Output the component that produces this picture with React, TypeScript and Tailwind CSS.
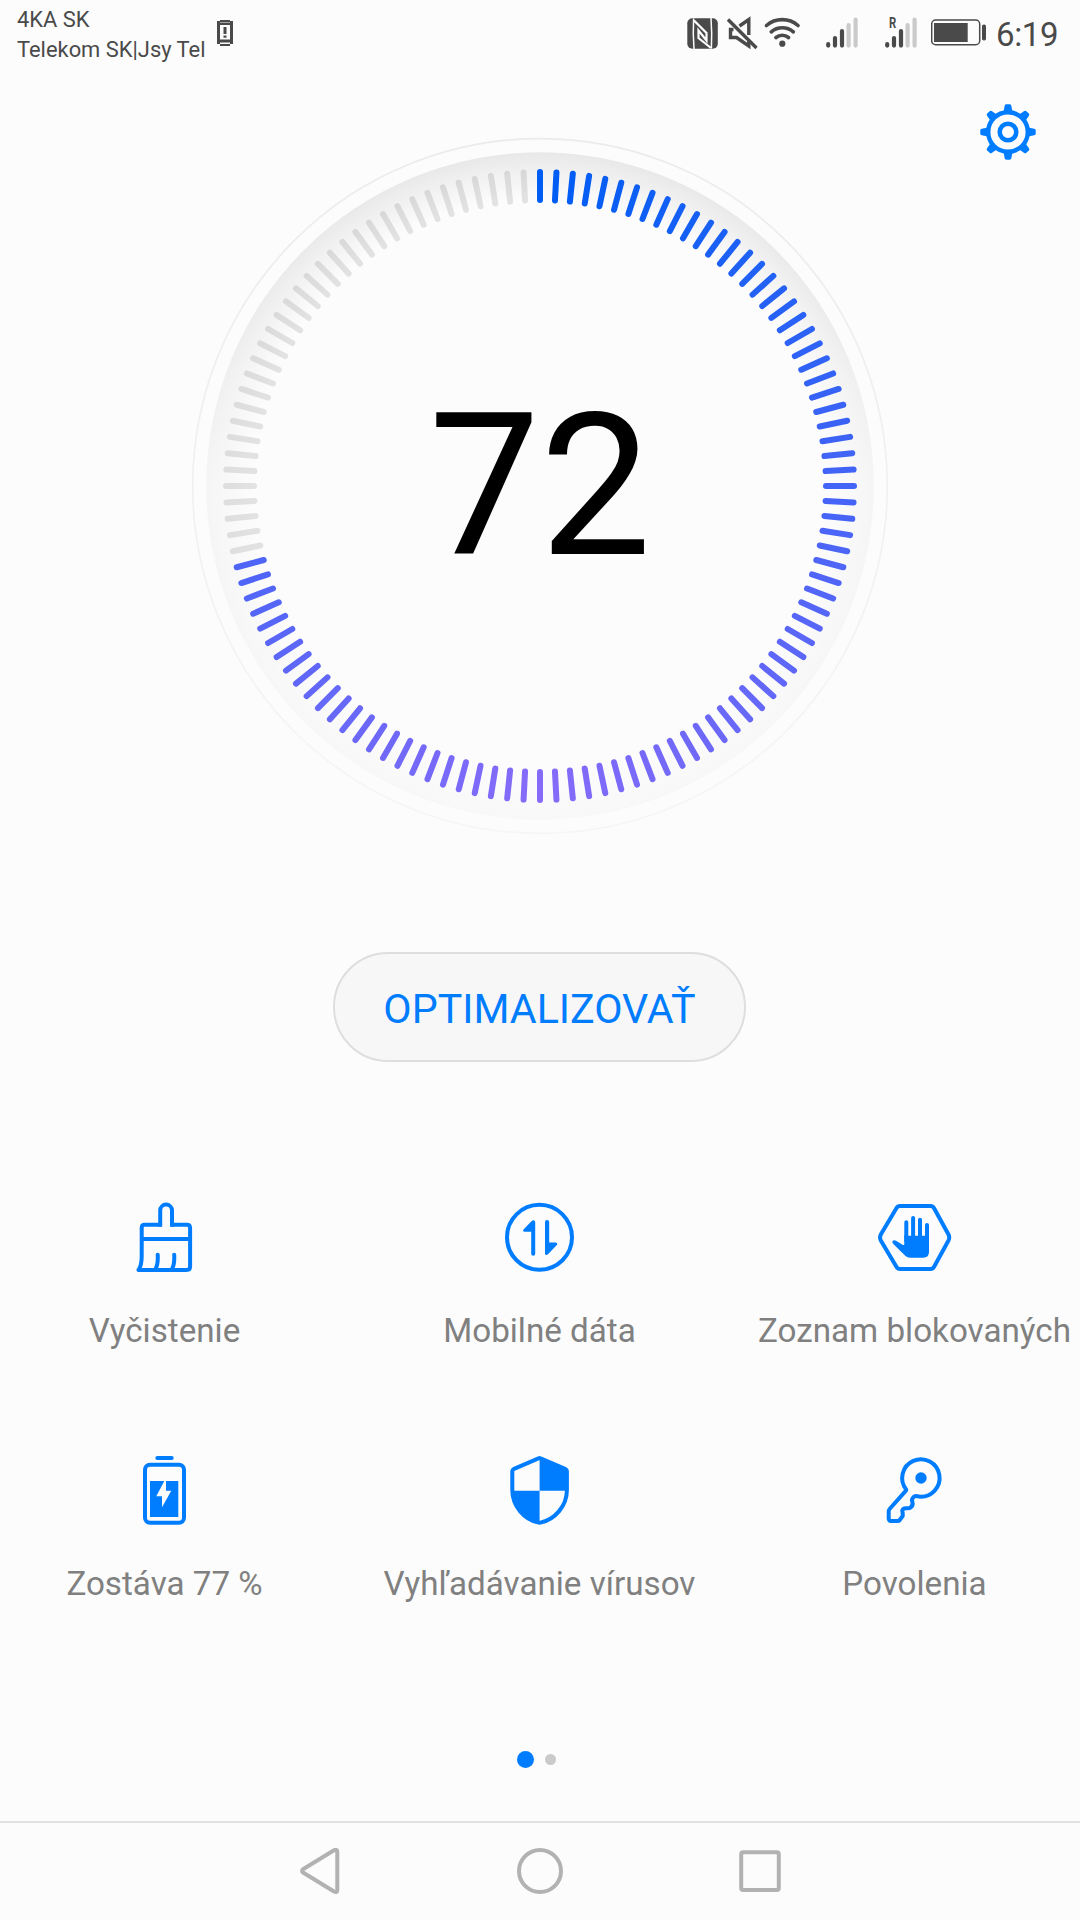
import type { ReactNode } from "react";

const BLUE = "#007dff";
const DARK = "#4a4a4a";

const TICKS = 120;
const SCORE = 72;

function Gauge() {
  const ticks = Array.from({ length: TICKS }, (_, i) => {
    const a = (i * 2 * Math.PI) / TICKS;
    const sin = Math.sin(a);
    const cos = Math.cos(a);
    const t = 1 - Math.abs(i - TICKS / 2) / (TICKS / 2);
    const active = i < Math.round((TICKS * SCORE) / 100);
    const color = active
      ? `rgb(${Math.round(134 * t)}, ${Math.round(93 + 14 * t)}, ${Math.round(244 + 5 * t)})`
      : "rgba(0,0,0,0.1)";
    return (
      <line
        key={i}
        x1={350 + 286 * sin}
        y1={350 - 286 * cos}
        x2={350 + 314 * sin}
        y2={350 - 314 * cos}
        stroke={color}
        strokeWidth="6"
        strokeLinecap="round"
      />
    );
  });
  return (
    <div className="grid h-[700px] w-[700px] place-items-center self-center">
      <svg viewBox="0 0 700 700" className="col-start-1 row-start-1 h-[700px] w-[700px]">
        <defs>
          <linearGradient id="disc" x1="0" y1="0" x2="0" y2="1">
            <stop offset="0" stopColor="#e8e8e8" />
            <stop offset="0.25" stopColor="#ececec" />
            <stop offset="0.5" stopColor="#f5f5f5" />
            <stop offset="1" stopColor="#f8f8f8" />
          </linearGradient>
          <radialGradient id="fade" gradientUnits="userSpaceOnUse" cx="350" cy="350" r="334">
            <stop offset="0.86" stopColor="#fcfcfc" />
            <stop offset="1" stopColor="#fcfcfc" stopOpacity="0" />
          </radialGradient>
          <linearGradient id="rim" x1="0" y1="0" x2="0" y2="1">
            <stop offset="0" stopColor="#ebebeb" />
            <stop offset="1" stopColor="#f6f6f6" />
          </linearGradient>
        </defs>
        <circle cx="350" cy="350" r="347.3" fill="none" stroke="url(#rim)" strokeWidth="1.7" />
        <circle cx="350" cy="350" r="333.7" fill="url(#disc)" />
        <circle cx="350" cy="350" r="333" fill="url(#fade)" />
        {ticks}
      </svg>
      <div className="col-start-1 row-start-1 text-[198px] leading-[200px] text-black">{SCORE}</div>
    </div>
  );
}

function Signal({ roaming = false }: { roaming?: boolean }) {
  return (
    <div className="relative h-[34px] w-[32px]">
      <svg viewBox="0 0 32 34" className="h-[34px] w-[32px]" strokeWidth="4.2" strokeLinecap="round">
        <g stroke={DARK}>
          <path d="M2.2 28.2v1.4M9 22v7.6M16 15v14.6" />
        </g>
        <g stroke="#cacaca">
          <path d="M22.6 9v20.6M29.6 3.6v26" />
        </g>
      </svg>
      {roaming && (
        <span className="absolute top-[-1px] left-[4px] origin-left scale-x-75 text-[15px] leading-[17px] font-bold text-[#4a4a4a]">
          R
        </span>
      )}
    </div>
  );
}

function StatusBar() {
  return (
    <header className="flex h-[66px] items-start justify-between pr-[21px] pl-[17px] text-[#4a4a4a]">
      <div className="flex pt-[5px]">
        <div className="text-[21.900px] leading-[30px] whitespace-nowrap">
          <div>4KA SK</div>
          <div>Telekom SK|Jsy Tel</div>
        </div>
        <svg viewBox="217 20 16 26" className="mt-[15px] ml-[11px] h-[26px] w-[16px]" fill={DARK}>
          <path d="M220 20h10v2h-10zM220 44h10v2h-10z" />
          <path fillRule="evenodd" d="M217 21h3v1.500h10V21h3v23h-3v-1.500h-10V44h-3zM220 25v14.500h10V25z" />
          <path d="M223.500 27h3v7h-3zM223.500 35.500h3v2.300h-3z" />
        </svg>
      </div>
      <div className="mt-4 flex h-[34px] items-center">
        <svg viewBox="687 16 31 34" className="h-[34px] w-[31px]">
          <rect x="687.300" y="18.300" width="30.500" height="30.500" rx="5" fill={DARK} />
          <g fill="none" stroke="#fcfcfc">
            <path strokeWidth="1.500" d="M693.600 18.500q-.8 15 .4 30.500M711.400 48.500q.8-15-.4-30.500" />
            <path strokeWidth="2.200" d="M694 20.500L706.500 33V40.500L698.500 30.500V38L711 48" />
          </g>
        </svg>
        <svg viewBox="727 16 31 34" className="ml-[9px] h-[34px] w-[31px]" fill="none" stroke={DARK} strokeWidth="3.400">
          <path d="M728 19.500l28.500 28.500" />
          <path d="M739.500 26l9.300-6.500v15.500M733.500 29.500h-3v8h6l12.300 8.500v-5" />
        </svg>
        <svg viewBox="764 16 37 34" className="ml-[6px] h-[34px] w-[37px]" fill="none" stroke={DARK} strokeWidth="3.600" strokeLinecap="round">
          <path d="M766.500 25.500a24 24 0 0 1 31.500 0M771.300 31.800a17 17 0 0 1 22 0M776 37.500a10 10 0 0 1 12.500 0" />
          <circle cx="782.300" cy="43.700" r="3.100" fill={DARK} stroke="none" />
        </svg>
        <div className="ml-[25px]">
          <Signal />
        </div>
        <div className="ml-[27px]">
          <Signal roaming />
        </div>
        <svg viewBox="931 16 56 34" className="ml-[14px] h-[34px] w-[56px]">
          <rect x="931.700" y="20" width="48" height="24.700" rx="4" fill="none" stroke={DARK} strokeWidth="1.500" />
          <rect x="934" y="23" width="33.700" height="19" fill={DARK} />
          <rect x="982" y="24.500" width="4" height="16" rx="1.800" fill={DARK} />
        </svg>
        <div className="ml-[9px] h-[34px] w-[63px] pt-[2px] text-[33px] leading-[34px] tracking-[-0.4px] whitespace-nowrap">6:19</div>
      </div>
    </header>
  );
}

function Gear() {
  return (
    <svg viewBox="-28 -28 56 56" className="h-[56px] w-[56px]" fill={BLUE}>
      {[0, 45, 90, 135, 180, 225, 270, 315].map((a) => (
        <path key={a} transform={`rotate(${a})`} d="M-4.500-20l1.200-6.300q.3-1.400 1.600-1.400h3.400q1.300 0 1.600 1.400l1.200 6.300z" />
      ))}
      <circle r="19.800" fill="#fcfcfc" stroke={BLUE} strokeWidth="4.400" />
      <circle r="8.300" fill="none" stroke={BLUE} strokeWidth="4.500" />
    </svg>
  );
}

function Icon({ children }: { children: ReactNode }) {
  return (
    <svg
      viewBox="0 0 72 72"
      className="h-[72px] w-[72px] overflow-visible"
      fill="none"
      stroke={BLUE}
      strokeWidth="4"
      strokeLinecap="round"
      strokeLinejoin="round"
    >
      {children}
    </svg>
  );
}

const items: { label: string; icon: ReactNode }[] = [
  {
    label: "Vyčistenie",
    icon: (
      <Icon>
        <path strokeLinecap="square" d="M31.200 23.800V9.500a5.900 5.900 0 0 1 11.800 0V23.800" />
        <path d="M31.200 23.800H15.700q-3 0-3 3V55q0 9.500-3.200 14H57.500q3.600 0 3.600-3.600V27q0-3.200-3.200-3.200H43M12.700 38H61M28.700 53.700q.6 10-2.500 15M45.200 53.700q.6 10-2.500 15" />
      </Icon>
    ),
  },
  {
    label: "Mobilné dáta",
    icon: (
      <Icon>
        <circle cx="35.500" cy="36.300" r="32.500" />
        <path fill={BLUE} stroke="none" d="M31.200 21v31.700a1.900 1.900 0 0 1-4 0V30.800H20.500q-2.200-.5-1-2.300L28 19.700q2.700-1.200 3.200 1.300zM41 52.700V21a2.100 2.100 0 0 1 4.200 0v20.500h6.600q2.300.6 1 2.500L44 53.300q-2.500 1.500-3-.6z" />
      </Icon>
    ),
  },
  {
    label: "Zoznam blokovaných",
    icon: (
      <Icon>
        <path d="M21 5H51.500q2.300 0 3.600 2.200L69.500 33.500q1.500 3 0 6L55.100 65.800Q53.800 68 51.500 68H21q-2.300 0-3.600-2.200L1.800 39.500q-1.500-3 0-6L17.400 7.200Q18.700 5 21 5z" />
        <path d="M27.300 21.300V40M34.100 17V40M41 18.700V40M48 24V40" />
        <path fill={BLUE} stroke="none" d="M25.300 34h1l1 .7h20.700L50 32V51q0 5.700-5.700 5.700H31q-2.500 0-4.500-1.800L14.300 43q-1.600-1.800-.6-3.200 1.300-1.200 3.300 0L24 43.900q1.300.4 1.300-1.200z" />
      </Icon>
    ),
  },
  {
    label: "Zostáva 77 %",
    icon: (
      <Icon>
        <path d="M28.300 4H42.700" />
        <rect x="16" y="10.800" width="39" height="58" rx="5" />
        <path fill={BLUE} stroke="none" d="M21 27H35.300L27.300 42.300H33V53.300L42.300 36.700H37V27H49.300V63H21z" />
      </Icon>
    ),
  },
  {
    label: "Vyhľadávanie vírusov",
    icon: (
      <Icon>
        <path d="M34.500 4.300q1-.5 2 0L61.700 15.200q1.200.6 1.200 2V36C62.900 52 51 65.500 36.500 68.600q-1 .2-2 0C20 65.500 8.300 52 8.300 36V17.200q0-1.400 1.200-2z" />
        <path fill={BLUE} stroke="none" d="M35.600 4L63 15.500V36.700H35.600zM35.600 36.700V69C20 66 8.300 52 8 36.700z" />
      </Icon>
    ),
  },
  {
    label: "Povolenia",
    icon: (
      <Icon>
        <path d="M27.300 35.700A18.700 18.700 0 1 1 40 42.600Q37 41.500 35.200 42.500 32 45.500 33.300 47.500 34.500 51.500 31.500 53.500 30.500 54.500 28 54.300 24 53.800 23.200 56.700 24 59 23.700 62L20.500 66.300Q20 67 18.700 67H12.300Q9.700 67 9.700 64.300V57.500Q9.700 56 10.600 55L26.500 37.200Q27.500 36.300 27.300 35.700z" />
        <circle cx="42" cy="24" r="5.700" fill={BLUE} stroke="none" />
      </Icon>
    ),
  },
];

export default function App() {
  return (
    <div className="flex h-[1920px] w-[1080px] flex-col overflow-hidden bg-[#fcfcfc] font-[Roboto,sans-serif]">
      <StatusBar />
      <div className="flex h-[70px] justify-end pt-[38px] pr-[44px]">
        <button className="h-[56px]">
          <Gear />
        </button>
      </div>
      <Gauge />
      <button className="mt-[116px] mr-px h-[110px] w-[413px] shrink-0 self-center rounded-full border-2 border-[#dedede] bg-[#f7f7f7] pt-1 text-[41.200px] leading-[48px] text-[#007dff]">
        OPTIMALIZOVAŤ
      </button>
      <div className="mt-[139px] grid grid-cols-3 gap-x-[63px] gap-y-[103px] px-[9px]">
        {items.map((item) => (
          <div key={item.label} className="flex h-[150px] flex-col items-center">
            {item.icon}
            <span className="mt-[38px] mr-px text-[33.200px] leading-[40px] whitespace-nowrap text-[#808080]">{item.label}</span>
          </div>
        ))}
      </div>
      <div className="mt-[147px] flex h-[17px] items-center gap-[11px] pl-[517px]">
        <span className="h-[17px] w-[17px] rounded-full bg-[#007dff]" />
        <span className="h-[11px] w-[11px] rounded-full bg-[#cacaca]" />
      </div>
      <nav className="mt-auto flex h-[99px] items-center justify-center gap-[174px] border-t-2 border-[#e1e1e1] pb-[2px]">
        <svg viewBox="297 1848 46 46" className="h-[46px] w-[46px]" fill="none" stroke="#b2b2b2" strokeWidth="4" strokeLinejoin="round">
          <path d="M334 1850.300q3.200-1.300 3.300 1.200v38.800q-.2 2.500-3.300 1.200L303 1872.500q-1.800-1.500 0-3.200z" />
        </svg>
        <svg viewBox="0 0 46 46" className="h-[46px] w-[46px]" fill="none" stroke="#b2b2b2" strokeWidth="4">
          <circle cx="23" cy="23" r="21" />
        </svg>
        <svg viewBox="737 1848 46 46" className="h-[46px] w-[46px]" fill="none" stroke="#b2b2b2" strokeWidth="4">
          <rect x="741.200" y="1852.300" width="37.600" height="37.600" rx="2" />
        </svg>
      </nav>
    </div>
  );
}
